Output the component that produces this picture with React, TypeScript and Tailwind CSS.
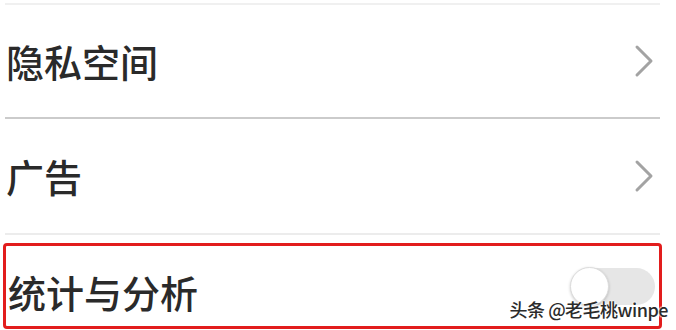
import React from "react";

const font = { fontFamily: '"Noto Sans CJK SC", "Noto Sans", sans-serif' };

function Chevron() {
  return (
    <svg width="20" height="34" viewBox="0 0 20 34" fill="none" className="mr-[6px]">
      <polyline
        points="3,3 17,17 3,31"
        stroke="#a3a3a3"
        strokeWidth="3"
        strokeLinecap="round"
        strokeLinejoin="round"
      />
    </svg>
  );
}

function LinkRow({ label, height }: { label: string; height: string }) {
  return (
    <div className={`flex items-center justify-between ${height}`}>
      <span className="pl-[1px] text-[38px] font-medium leading-none text-[#2a2a2a]">{label}</span>
      <Chevron />
    </div>
  );
}

export default function App() {
  return (
    <div className="relative w-[676px] h-[330px] bg-white overflow-hidden" style={font}>
      <div className="ml-[5px] w-[655px] pt-[3px]">
        <div className="h-[2px] bg-[#f0f0f0]" />
        <LinkRow label="隐私空间" height="h-[112px]" />
        <div className="h-[2px] bg-[#cbcbcb]" />
        <LinkRow label="广告" height="h-[114px]" />
        <div className="h-[2px] bg-[#ececec]" />

        <div className="mt-[8px] -ml-[2px] w-[659px] h-[86px] border-[3px] border-[#e21d1d] rounded-[4px] flex items-center justify-between">
          <span className="pl-[2px] pt-[12px] text-[38px] font-medium leading-none text-[#2a2a2a]">统计与分析</span>
          <div className="relative mr-[4px] w-[80px] h-[37px] rounded-full bg-[#e6e6e6]">
            <div className="absolute -left-[5px] -top-[1px] w-[39px] h-[39px] rounded-full bg-white border border-[#dcdcdc] shadow-[0_1px_3px_rgba(0,0,0,0.2)]" />
          </div>
        </div>
      </div>

      <div
        className="absolute right-[8px] top-[300px] text-[18px] font-medium leading-none text-[#2b2b2b] tracking-[-0.5px]"
        style={{ ...font, textShadow: "0 0 2px #fff, 0 0 2px #fff, 0 0 2px #fff" }}
      >
        头条 @老毛桃winpe
      </div>
    </div>
  );
}
